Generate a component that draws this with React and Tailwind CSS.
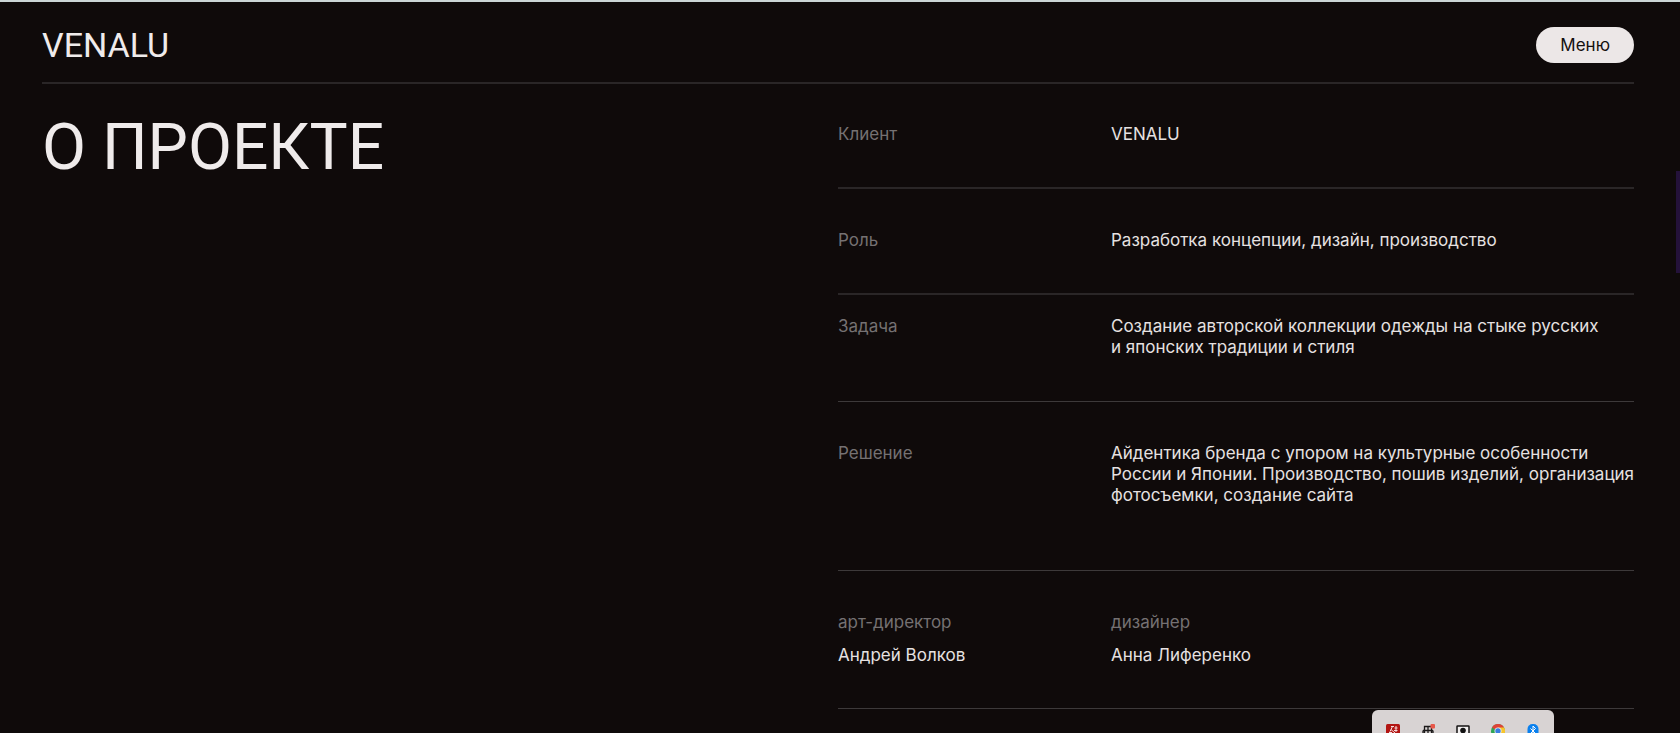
const facts = [
  { label: 'Клиент', lines: ['VENALU'], row: 'pt-10 pb-[42px] border-b-2 border-[#2a2627]' },
  { label: 'Роль', lines: ['Разработка концепции, дизайн, производство'], row: 'pt-[41px] pb-[42px] border-b-2 border-[#2a2627]' },
  {
    label: 'Задача',
    lines: ['Создание авторской коллекции одежды на стыке русских', 'и японских традиции и стиля'],
    row: 'pt-[21px] pb-[43px] border-b border-[#3d393a]',
  },
  {
    label: 'Решение',
    lines: [
      'Айдентика бренда с упором на культурные особенности',
      'России и Японии. Производство, пошив изделий, организация',
      'фотосъемки, создание сайта',
    ],
    row: 'pt-[41px] pb-[64px] border-b border-[#3d393a]',
  },
];

const team = [
  { role: 'арт-директор', name: 'Андрей Волков' },
  { role: 'дизайнер', name: 'Анна Лиференко' },
];

const Header = () => (
  <header className="flex items-center justify-between border-b-2 border-[#2a2627] pt-[23px] pb-[17px]">
    <a href="#" className="font-['Roboto',sans-serif] text-[34px] leading-10 text-[#efebeb]">
      VENALU
    </a>
    <button type="button" className="h-9 rounded-full bg-[#ece7e7] px-6 text-[17px] leading-5 text-[#14100f]">
      Меню
    </button>
  </header>
);

const FactRow = ({ label, lines, row }) => (
  <div className={`grid grid-cols-[273px_1fr] ${row}`}>
    <dt className="text-[#757172]">{label}</dt>
    <dd>
      {lines.map((line) => (
        <span key={line} className="block whitespace-nowrap">
          {line}
        </span>
      ))}
    </dd>
  </div>
);

const DockIcon = ({ label, children }) => (
  <svg className="size-3.5" viewBox="0 0 14 14" fill="none" role="img" aria-label={label}>
    {children}
  </svg>
);

const Dock = () => (
  <div className="absolute right-[126px] bottom-0 flex h-[23px] w-[182px] items-start justify-between overflow-hidden rounded-t-md bg-[#d8d3d3] px-3.5 pt-3.5">
    <DockIcon label="Reader">
      <rect width="14" height="14" rx="1.5" fill="#b31512" />
      <path d="M5 2.5h3M6.5 2.5 4 7.5M5 5.5l4 3.5M8.5 4h3M8 6.5h3.5M10 2v6M3 8.5h3" stroke="#f4dcdc" strokeWidth="1" />
    </DockIcon>
    <DockIcon label="Teams">
      <path d="M3.5 2.5h7v10h-7zM2 6.5h10M7 2v10.5M2 6.5v4h10v-4" stroke="#1c1a1a" strokeWidth="1.3" />
      <rect x="9.5" width="4.5" height="4.5" rx="1" fill="#e75749" />
    </DockIcon>
    <DockIcon label="Recorder">
      <rect x="1" y="2" width="12" height="11" rx="0.5" fill="#f2efef" stroke="#151313" strokeWidth="1.5" />
      <circle cx="7" cy="6.5" r="2.8" fill="#111" />
    </DockIcon>
    <DockIcon label="Chrome">
      <circle cx="7" cy="7" r="7" fill="#2fa553" />
      <path d="M7 7 .9 3.5A7 7 0 0 1 13.1 3.5z" fill="#df4338" />
      <path d="M7 3.5h6.1A7 7 0 0 1 7 14l3-5.3z" fill="#f7c52b" />
      <circle cx="7" cy="7" r="3.5" fill="#eee" />
      <circle cx="7" cy="7" r="2.7" fill="#3b7de0" />
    </DockIcon>
    <DockIcon label="Bluetooth">
      <rect x="1.5" width="11" height="14" rx="5" fill="#0a80ee" />
      <path d="m4.5 4.5 5 5L7 12V2l2.5 2.5-5 5" stroke="#fff" strokeWidth="1" />
    </DockIcon>
  </div>
);

export default function App() {
  return (
    <div className="relative min-h-screen overflow-hidden border-t-2 border-[#ccd5d6] bg-[#0f0a0a] pr-[46px] pl-[42px] font-['Inter',sans-serif] text-[#e6e1e1]">
      <Header />
      <main className="grid grid-cols-2">
        <h1 className="pt-8 font-['Roboto',sans-serif] text-[64px] leading-[64px] font-normal text-[#efebeb]">
          О ПРОЕКТЕ
        </h1>
        <section className="text-[17px] leading-[21px]">
          <dl>
            {facts.map((fact) => (
              <FactRow key={fact.label} {...fact} />
            ))}
          </dl>
          <dl className="grid grid-cols-[273px_1fr] border-b border-[#3d393a] pt-[41px] pb-[42px]">
            {team.map(({ role, name }) => (
              <div key={role} className="flex flex-col gap-3">
                <dt className="text-[#757172]">{role}</dt>
                <dd>{name}</dd>
              </div>
            ))}
          </dl>
        </section>
      </main>
      <div className="absolute top-[169px] right-0 h-[102px] w-1 bg-[#24123a]" />
      <Dock />
    </div>
  );
}
